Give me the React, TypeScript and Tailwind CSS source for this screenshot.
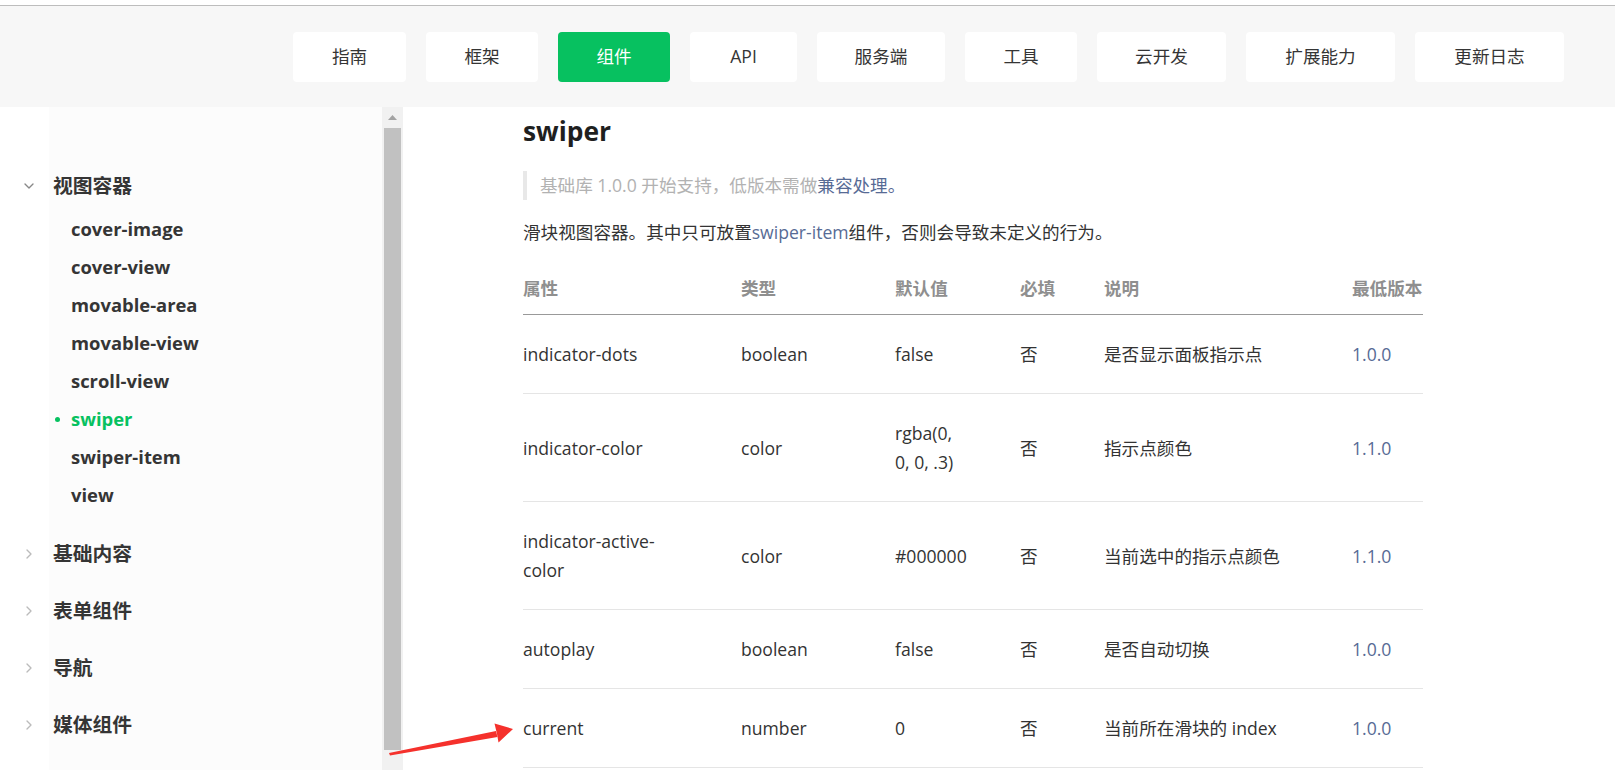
import React from 'react';
import { ChevronDown, ChevronRight } from 'lucide-react';

const navItems = [
  { label: '指南', w: 'w-[113px]' },
  { label: '框架', w: 'w-[112px]' },
  { label: '组件', w: 'w-[112px]' },
  { label: 'API', w: 'w-[107px]' },
  { label: '服务端', w: 'w-[128px]' },
  { label: '工具', w: 'w-[112px]' },
  { label: '云开发', w: 'w-[129px]' },
  { label: '扩展能力', w: 'w-[149px]' },
  { label: '更新日志', w: 'w-[149px]' },
];

const viewItems = [
  'cover-image',
  'cover-view',
  'movable-area',
  'movable-view',
  'scroll-view',
  'swiper',
  'swiper-item',
  'view',
];

const groups = ['基础内容', '表单组件', '导航', '媒体组件'];

interface Row {
  name: string[];
  type: string;
  def: string[];
  required: string;
  desc: string;
  version: string;
}

const rows: Row[] = [
  { name: ['indicator-dots'], type: 'boolean', def: ['false'], required: '否', desc: '是否显示面板指示点', version: '1.0.0' },
  { name: ['indicator-color'], type: 'color', def: ['rgba(0,', '0, 0, .3)'], required: '否', desc: '指示点颜色', version: '1.1.0' },
  { name: ['indicator-active-', 'color'], type: 'color', def: ['#000000'], required: '否', desc: '当前选中的指示点颜色', version: '1.1.0' },
  { name: ['autoplay'], type: 'boolean', def: ['false'], required: '否', desc: '是否自动切换', version: '1.0.0' },
  { name: ['current'], type: 'number', def: ['0'], required: '否', desc: '当前所在滑块的 index', version: '1.0.0' },
];

const headers = ['属性', '类型', '默认值', '必填', '说明', '最低版本'];

const cols = 'grid grid-cols-[218px_154px_125px_84px_248px_71px] items-center';

const Lines = ({ lines }: { lines: string[] }) => (
  <div>
    {lines.map((l) => (
      <div key={l} className="whitespace-nowrap">
        {l}
      </div>
    ))}
  </div>
);

const App = () => {
  return (
    <div className="relative h-[770px] w-[1615px] overflow-hidden bg-white font-['Open_Sans','Noto_Sans_CJK_SC',sans-serif] text-[#333]">
      <div className="h-[5px] bg-white" />
      <div className="h-px bg-[#bdbdbd]" />

      {/* top nav */}
      <header className="flex h-[101px] items-center gap-5 bg-[#f7f7f7] pl-[293px]">
        {navItems.map((item) => (
          <div
            key={item.label}
            className={`flex h-[50px] items-center justify-center rounded-[4px] text-[17.6px] ${item.w} ${
              item.label === '组件' ? 'bg-[#07c160] text-white' : 'bg-white text-[#353535]'
            }`}
          >
            {item.label}
          </div>
        ))}
      </header>

      <div className="flex h-[663px]">
        {/* sidebar */}
        <aside className="w-[382px] bg-[linear-gradient(to_right,#ffffff_49px,#fcfcfc_49px)] pt-[55px]">
          <div className="flex h-[48px] items-center pl-[21px]">
            <ChevronDown className="mr-[16px] h-[16px] w-[16px] text-[#888]" strokeWidth={2} />
            <span className="text-[19.8px] font-bold text-[#353535]">视图容器</span>
          </div>
          <ul className="pb-[16px]">
            {viewItems.map((item) => (
              <li key={item} className="flex h-[38px] items-center pl-[55px]">
                <span className="flex w-[16px] items-center">
                  {item === 'swiper' && <span className="h-[5px] w-[5px] rounded-full bg-[#07c160]" />}
                </span>
                <span
                  className={`text-[18.4px] font-bold ${item === 'swiper' ? 'text-[#07c160]' : 'text-[#353535]'}`}
                >
                  {item}
                </span>
              </li>
            ))}
          </ul>
          <div className="flex flex-col gap-[9px]">
            {groups.map((g) => (
              <div key={g} className="flex h-[48px] items-center pl-[21px]">
                <ChevronRight className="mr-[16px] h-[16px] w-[16px] text-[#bbb]" strokeWidth={2} />
                <span className="text-[19.8px] font-bold text-[#353535]">{g}</span>
              </div>
            ))}
          </div>
        </aside>

        {/* sidebar scrollbar */}
        <div className="flex w-[21px] flex-col bg-[#f1f1f1]">
          <div className="flex h-[21px] items-center justify-center">
            <svg width="9" height="5" viewBox="0 0 9 5">
              <polygon points="4.5,0 9,5 0,5" fill="#a3a3a3" />
            </svg>
          </div>
          <div className="mx-[2px] h-[622px] bg-[#c1c1c1]" />
        </div>

        {/* content */}
        <main className="flex-1 pl-[120px]">
          <div className="flex h-[50px] items-center text-[26.4px] font-bold text-[#1f1f1f]">swiper</div>

          <div className="mt-[14px] flex h-[29px] items-center border-l-4 border-[#e8e8e8] pl-[13px] text-[17.6px] leading-[29px] text-[#b2b2b2]">
            基础库 1.0.0 开始支持，低版本需做<span className="text-[#576b95]">兼容处理。</span>
          </div>

          <p className="mt-[18px] text-[17.6px] leading-[29px]">
            滑块视图容器。其中只可放置<span className="text-[#576b95]">swiper-item</span>组件，否则会导致未定义的行为。
          </p>

          <div className="mt-[27px] w-[900px] text-[17.6px] leading-[29px]">
            <div className={`${cols} border-b border-[#999] pb-[11px] font-bold text-[#8f8f8f]`}>
              {headers.map((h) => (
                <div key={h} className="whitespace-nowrap">
                  {h}
                </div>
              ))}
            </div>
            {rows.map((r) => (
              <div key={r.name.join('')} className={`${cols} border-b border-[#e5e5e5] pt-[25px] pb-[24px]`}>
                <Lines lines={r.name} />
                <div>{r.type}</div>
                <Lines lines={r.def} />
                <div>{r.required}</div>
                <div className="whitespace-nowrap">{r.desc}</div>
                <div className="text-[#576b95]">{r.version}</div>
              </div>
            ))}
          </div>
        </main>
      </div>

      {/* annotation arrow */}
      <svg className="pointer-events-none absolute left-0 top-0" width="1615" height="770" viewBox="0 0 1615 770">
        <polygon points="389,753 496,731 497.5,737 390,755.5" fill="#f5312c" />
        <polygon points="513,729 494.5,723.5 497,734 498.5,742.5" fill="#f5312c" />
      </svg>
    </div>
  );
};

export default App;
